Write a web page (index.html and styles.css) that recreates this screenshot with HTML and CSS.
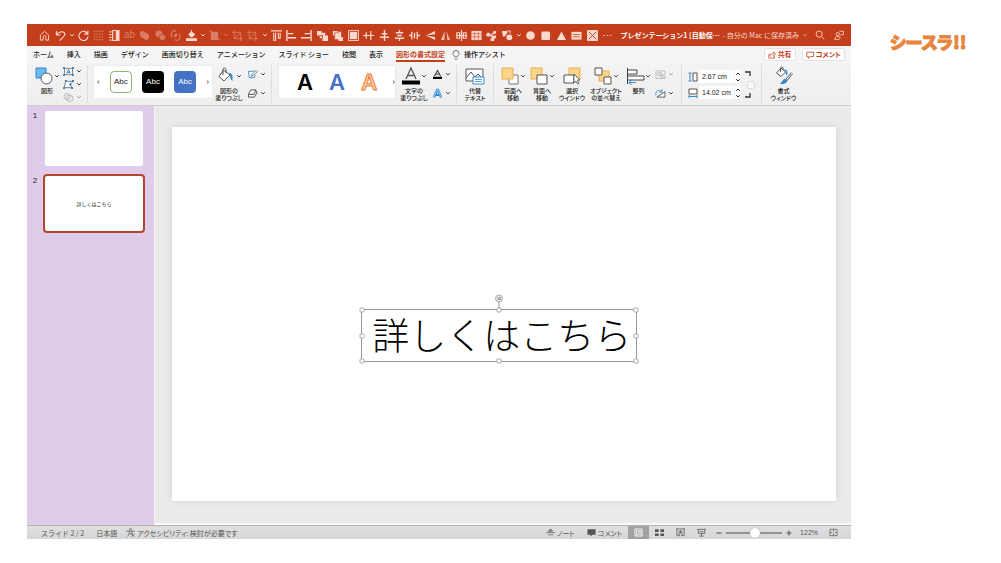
FILE: index.html
```html
<!DOCTYPE html>
<html lang="ja">
<head>
<meta charset="utf-8">
<title>プレゼンテーション1</title>
<link rel="stylesheet" href="styles.css">
</head>
<body>
<svg class="sprite" aria-hidden="true">
  <symbol id="chev" viewBox="0 0 6 6"><path d="M1.200 2.200 3 4 4.800 2.200" fill="none" stroke="currentColor" stroke-width="1"/></symbol>
  <symbol id="home" viewBox="0 0 12 12"><path d="M1.500 5.500 6 1.500l4.500 4V11H7.500V7.500a1.500 1.500 0 0 0-3 0V11h-3z" fill="none" stroke="currentColor"/></symbol>
  <symbol id="undo" viewBox="0 0 12 12"><path d="M1.500 1v4.500H6M1.800 5.200C5 1 10.500 1 10.700 4.500c0 2-2.700 4-5.700 7" fill="none" stroke="currentColor" stroke-width="1.200"/></symbol>
  <symbol id="redo" viewBox="0 0 12 12"><path d="M10.800.5v4H7M10.500 4.200A5 5 0 1 0 11 7" fill="none" stroke="currentColor" stroke-width="1.200"/></symbol>
  <symbol id="dots" viewBox="0 0 12 12"><path d="M1 1.500h10M1 4.500h10M1 7.500h10M1 10.500h10" stroke="currentColor" stroke-width="1.500" stroke-dasharray="1.500 1.300"/></symbol>
  <symbol id="columns" viewBox="0 0 12 12"><path d="M0 2h3M0 5h3M0 8h3M0 11h3" stroke="currentColor"/><path d="M4 .5h4v11H4z" fill="none" stroke="currentColor" stroke-width="1.300"/><path d="M8.500 0h3v12h-3z" fill="currentColor"/></symbol>
  <symbol id="union" viewBox="0 0 12 12"><path d="M1 3.500C1 1.500 4 0 6 2.500 9 3 11.500 5 11 8s-4 4-6 1C2 9 1 6 1 3.500z" fill="currentColor"/></symbol>
  <symbol id="combine" viewBox="0 0 12 12"><circle cx="4.200" cy="4.200" r="3.700" fill="currentColor"/><circle cx="8" cy="8" r="3.500" fill="currentColor" stroke="#c43e1c" stroke-width=".8"/></symbol>
  <symbol id="intersect" viewBox="0 0 12 12"><path d="M7 1.500A3.500 3.500 0 1 0 3 7.500M9.500 4.500A3.500 3.500 0 1 1 5 10.500" fill="none" stroke="currentColor" stroke-width="1.300"/><path d="M4.500 6.500C4.500 4.500 6 3.500 8 4c.5 2-1 4-3 4z" fill="currentColor"/></symbol>
  <symbol id="fill" viewBox="0 0 12 12"><path d="M0 9h12v3H0zM2.500 5 6 1l4 4-3 3H5zM10 5l1.500 3" fill="currentColor"/><path d="M6 0v4" stroke="currentColor"/></symbol>
  <symbol id="cropfill" viewBox="0 0 12 12"><path d="M2 0h1v2h7v8H12v1H2z" fill="currentColor"/><path d="M0 2h3" stroke="currentColor"/></symbol>
  <symbol id="crop" viewBox="0 0 12 12"><path d="M2.500 0v9.500H12M0 2.500h9.500V12M3 9l6-6" fill="none" stroke="currentColor"/></symbol>
  <symbol id="aligntop" viewBox="0 0 12 12"><path d="M0 1h12M3 3v9h2V3M8 3v6h2V3" fill="none" stroke="currentColor" stroke-width="1.200"/></symbol>
  <symbol id="alignleft" viewBox="0 0 12 12"><path d="M1 0v12M2 4h6M2 8.500h9" fill="none" stroke="currentColor" stroke-width="1.500"/></symbol>
  <symbol id="alignright" viewBox="0 0 12 12"><path d="M11 0v12M10 4H4M10 8.500H0" fill="none" stroke="currentColor" stroke-width="1.500"/></symbol>
  <symbol id="tofront" viewBox="0 0 12 12"><path d="M0 1h5v2h4v3h3v6H6V9H3V6H0z" fill="currentColor"/><path d="M3 6h3v3" fill="none" stroke="#c43e1c"/></symbol>
  <symbol id="toback" viewBox="0 0 12 12"><path d="M1 1h5v1h4v6h2v4H7v-2H3V6H1z" fill="currentColor"/><path d="M3 8V3h5" fill="none" stroke="#c43e1c" stroke-width=".7"/></symbol>
  <symbol id="framed" viewBox="0 0 12 12"><path d="M.5.500h11v11H.5z" fill="none" stroke="currentColor"/><path d="M2 2h8v8H2z" fill="currentColor"/></symbol>
  <symbol id="disth" viewBox="0 0 12 12"><path d="M0 6h12M3.500 2.500v7M8.500 1v10" stroke="currentColor" stroke-width="1.300"/></symbol>
  <symbol id="alignmid" viewBox="0 0 12 12"><path d="M6 0v12M3 4h6M1 8h10" stroke="currentColor" stroke-width="1.600"/></symbol>
  <symbol id="distv" viewBox="0 0 12 12"><path d="M2 3h8M1 9h10M6 0v3M6 9v3M3.500 6h5" stroke="currentColor" stroke-width="1.500"/></symbol>
  <symbol id="dist3" viewBox="0 0 12 12"><path d="M3 2v8M9 2v8M0 6h3M9 6h3M6 3v6" fill="none" stroke="currentColor" stroke-width="1.500"/></symbol>
  <symbol id="flipv" viewBox="0 0 12 12"><path d="M11 1v3.500L1 6zM11 11V7.500L1 6z" fill="currentColor"/></symbol>
  <symbol id="fliph" viewBox="0 0 12 12"><path d="M5 1v10H1zM7 1l4 10H8z" fill="currentColor" opacity=".8"/></symbol>
  <symbol id="centerv" viewBox="0 0 12 12"><path d="M6 0v12M1 3h3v6H1zM8 3h3v6H8zM0 6h12" fill="none" stroke="currentColor" stroke-width="1.300"/></symbol>
  <symbol id="table" viewBox="0 0 12 12"><path d="M.5 1h11v10H.5z" fill="currentColor"/><path d="M1 4h10M1 7.500h10M4 2v9M8 2v9" stroke="#c43e1c" stroke-width=".6"/></symbol>
  <symbol id="connect" viewBox="0 0 12 12"><path d="M0 5.500h5M5 6l5-4M5 6l4 4" stroke="currentColor" stroke-width="1.500"/><path d="M1 3h3v4H1zM8 1h3v3H8zM7 6h4v3H7zM5 9h4v3H5z" fill="currentColor"/></symbol>
  <symbol id="shapes" viewBox="0 0 12 12"><path d="M0 1h6v2L3 7H1z" fill="currentColor"/><circle cx="8" cy="8" r="3.200" fill="currentColor"/><path d="M6 1h3v3" fill="none" stroke="currentColor"/></symbol>
  <symbol id="circle" viewBox="0 0 12 12"><circle cx="6" cy="6" r="4.700" fill="currentColor"/></symbol>
  <symbol id="square" viewBox="0 0 12 12"><rect x="1.500" y="1.500" width="9.500" height="9.500" rx="1.500" fill="currentColor"/></symbol>
  <symbol id="triangle" viewBox="0 0 12 12"><path d="M6 1.500 11 11H1z" fill="currentColor"/></symbol>
  <symbol id="textbox" viewBox="0 0 12 12"><path d="M.5 2h11v8.500H.5z" fill="currentColor"/><path d="M2 5h8M2 7.500h8" stroke="#c43e1c" stroke-width=".8"/></symbol>
  <symbol id="cross" viewBox="0 0 12 12"><path d="M.5.500h11v11H.5z" fill="currentColor" stroke="currentColor"/><path d="m2 2 8 8M10 2l-8 8" stroke="#c43e1c"/></symbol>
  <symbol id="more" viewBox="0 0 12 12"><path d="M1.500 6h1.500M5.300 6h1.500M9 6h1.500" stroke="currentColor" stroke-width="1.300"/></symbol>
  <symbol id="search" viewBox="0 0 12 12"><circle cx="5" cy="5" r="3.700" fill="none" stroke="currentColor"/><path d="m7.800 7.800 3.200 3.500" stroke="currentColor"/></symbol>
  <symbol id="people" viewBox="0 0 12 12"><circle cx="4.500" cy="5" r="2" fill="none" stroke="currentColor"/><path d="M1 11.500c0-2.500 1-3.500 3.500-3.500S8 9 7 10.500c-1.500 1.500-4 1-6 1M6.500 1.500h5v4H9L7.500 7" fill="none" stroke="currentColor"/></symbol>
  <symbol id="pail" viewBox="0 0 18 18"><path d="M6.500 3 2 9.500l5 4.500 6-6zM6 8V2.500a1.500 1.500 0 0 1 3 0V6" fill="#fff" stroke="#555"/><path d="M12 6c3 0 4 2 3.500 8-2-1-2-3-2.500-5z" fill="#2f8ad0"/></symbol>
</svg>

<div class="page">
<main class="window">
  <header class="titlebar">
    <div class="quick">
      <button aria-label="ホーム"><svg><use href="#home"/></svg></button>
      <button aria-label="元に戻す"><svg><use href="#undo"/></svg></button>
      <button class="drop" aria-label="履歴"><svg><use href="#chev"/></svg></button>
      <button aria-label="やり直し"><svg><use href="#redo"/></svg></button>
      <button class="dim" aria-label="グリッド"><svg><use href="#dots"/></svg></button>
      <button aria-label="段組み"><svg><use href="#columns"/></svg></button>
      <button class="dim ab">ab</button>
      <button class="dim" aria-label="接合"><svg><use href="#union"/></svg></button>
      <button class="dim" aria-label="型抜き"><svg><use href="#combine"/></svg></button>
      <button class="dim" aria-label="重なり抽出"><svg><use href="#intersect"/></svg></button>
      <button aria-label="塗りつぶし"><svg><use href="#fill"/></svg></button>
      <button class="drop" aria-label="塗りつぶしの色"><svg><use href="#chev"/></svg></button>
      <button class="dim" aria-label="図"><svg><use href="#cropfill"/></svg></button>
      <button class="drop dim" aria-label="図の種類"><svg><use href="#chev"/></svg></button>
      <button class="dim" aria-label="トリミング"><svg><use href="#crop"/></svg></button>
      <button class="dim" aria-label="図形に合わせる"><svg><use href="#crop"/></svg></button>
      <button class="drop" aria-label="トリミングの種類"><svg><use href="#chev"/></svg></button>
      <button aria-label="上揃え"><svg><use href="#aligntop"/></svg></button>
      <button aria-label="左揃え"><svg><use href="#alignleft"/></svg></button>
      <button aria-label="右揃え"><svg><use href="#alignright"/></svg></button>
      <button aria-label="最前面"><svg><use href="#tofront"/></svg></button>
      <button aria-label="最背面"><svg><use href="#toback"/></svg></button>
      <button aria-label="枠"><svg><use href="#framed"/></svg></button>
      <button aria-label="上下中央"><svg><use href="#disth"/></svg></button>
      <button aria-label="左右中央"><svg><use href="#alignmid"/></svg></button>
      <button aria-label="上下に整列"><svg><use href="#distv"/></svg></button>
      <button aria-label="左右に整列"><svg><use href="#dist3"/></svg></button>
      <button aria-label="上下反転"><svg><use href="#flipv"/></svg></button>
      <button aria-label="左右反転"><svg><use href="#fliph"/></svg></button>
      <button aria-label="中央"><svg><use href="#centerv"/></svg></button>
      <button aria-label="表"><svg><use href="#table"/></svg></button>
      <button aria-label="コネクタ"><svg><use href="#connect"/></svg></button>
      <button aria-label="図形"><svg><use href="#shapes"/></svg></button>
      <button class="drop" aria-label="図形の種類"><svg><use href="#chev"/></svg></button>
      <button aria-label="円"><svg><use href="#circle"/></svg></button>
      <button aria-label="四角形"><svg><use href="#square"/></svg></button>
      <button aria-label="三角形"><svg><use href="#triangle"/></svg></button>
      <button aria-label="テキストボックス"><svg><use href="#textbox"/></svg></button>
      <button aria-label="削除"><svg><use href="#cross"/></svg></button>
      <button aria-label="その他"><svg><use href="#more"/></svg></button>
    </div>
    <h1 class="doc"><b>プレゼンテーション1 [自動保⋯</b><span>- 自分の Mac に保存済み</span><svg class="chev"><use href="#chev"/></svg></h1>
    <div class="right-tools">
      <button aria-label="検索"><svg><use href="#search"/></svg></button>
      <button aria-label="共同編集"><svg><use href="#people"/></svg></button>
    </div>
  </header>

  <nav class="tabs">
    <button>ホーム</button><button>挿入</button><button>描画</button><button>デザイン</button><button>画面切り替え</button><button>アニメーション</button><button>スライド ショー</button><button>校閲</button><button>表示</button><button class="active">図形の書式設定</button>
    <button class="assist"><svg viewBox="0 0 8 10"><path d="M2.700 7C2.700 5.500 1 5 1 3.300a3 3 0 0 1 6 0C7 5 5.300 5.500 5.300 7zM2.800 9.300h2.400" fill="none" stroke="#666" stroke-width=".9"/></svg>操作アシスト</button>
    <span class="spacer"></span>
    <button class="pill"><svg viewBox="0 0 10 10"><path d="M3 4H1v5h7V6M3 7c0-3 2-4 4-4V1l2.500 3L7 6V4.500" fill="none" stroke="currentColor" stroke-width=".9"/></svg>共有</button>
    <button class="pill"><svg viewBox="0 0 10 10"><path d="M1 1.500h8.500v5.500H5L3 9V7H1z" fill="none" stroke="currentColor"/></svg>コメント</button>
  </nav>

  <section class="ribbon">
    <button class="tool">
      <span class="art"><svg class="big" viewBox="0 0 18 18"><path d="M1 1h10v10H1z" fill="#6db8ee" stroke="#2f8ad0"/><circle cx="11.500" cy="11.500" r="5.500" fill="#fff" stroke="#555"/></svg><svg class="chev"><use href="#chev"/></svg></span>
      <span class="label">図形</span>
    </button>
    <div class="stack three ruled">
      <button aria-label="テキスト ボックス"><svg viewBox="0 0 12 10"><path d="M1.500 1.500h9v7h-9z" fill="#fff" stroke="#777"/><path d="M4 7.500 6 2.500l2 5M4.700 6h2.600" fill="none" stroke="#1d78c1"/><path d="M0 0h2v2H0zM10 0h2v2h-2zM0 8h2v2H0zM10 8h2v2h-2z" fill="#1d78c1"/></svg><svg class="chev"><use href="#chev"/></svg></button>
      <button aria-label="頂点の編集"><svg viewBox="0 0 12 10"><path d="M3 1.500h8L8 5l2 3.500H1z" fill="#fff" stroke="#777"/><path d="M2 0h2v2H2zM10 0h2v2h-2zM0 8h2v2H0zM9 8h2v2H9zM7 4h2v2H7z" fill="#1d78c1"/></svg><svg class="chev"><use href="#chev"/></svg></button>
      <button class="off" aria-label="図形の結合"><svg viewBox="0 0 12 10"><circle cx="4.500" cy="4" r="3.500" fill="#ddd" stroke="#777"/><circle cx="7.500" cy="6" r="3.500" fill="none" stroke="#777"/></svg><svg class="chev"><use href="#chev"/></svg></button>
    </div>
    <div class="gallery">
      <span class="arrow">‹</span>
      <button class="swatch light">Abc</button>
      <button class="swatch black">Abc</button>
      <button class="swatch blue">Abc</button>
      <span class="arrow">›</span>
    </div>
    <button class="tool">
      <span class="art"><svg class="big"><use href="#pail"/></svg><svg class="chev"><use href="#chev"/></svg></span>
      <span class="label">図形の<br>塗りつぶし</span>
    </button>
    <div class="stack ruled">
      <button aria-label="図形の枠線"><svg viewBox="0 0 12 10"><path d="M9 5.500 8 8.500H2.500L1.500 1.500H8" fill="#fff" stroke="#2f8ad0"/><path d="m4.500 7 1-2.500L10 .5 11.500 2 7 6z" fill="#fff" stroke="#555" stroke-width=".8"/></svg><svg class="chev"><use href="#chev"/></svg></button>
      <button aria-label="図形の効果"><svg viewBox="0 0 12 10"><path d="M4 1h5.500L8 6H1.500zM1.500 6v3H8l3-4.500L9.500 1" fill="#fff" stroke="#444"/></svg><svg class="chev"><use href="#chev"/></svg></button>
    </div>
    <div class="gallery art-text">
      <button class="wa">A</button>
      <button class="wa wa-blue">A</button>
      <button class="wa wa-orange">A</button>
      <span class="arrow">›</span>
    </div>
    <button class="tool">
      <span class="art"><svg class="big" viewBox="0 0 18 18"><path d="M4 12 9 1l5 11M5.500 8.500h7" fill="none" stroke="#555" stroke-width="1.300"/><path d="M0 13.500h18v4H0z"/></svg><svg class="chev"><use href="#chev"/></svg></span>
      <span class="label">文字の<br>塗りつぶし</span>
    </button>
    <div class="stack ruled">
      <button aria-label="文字の輪郭"><svg viewBox="0 0 12 10"><path d="M2.500 7 6 .5 9.500 7M4 4.800h4" fill="none" stroke="#444" stroke-width="1.200"/><path d="M1 7.500h10V10H1z"/></svg><svg class="chev"><use href="#chev"/></svg></button>
      <button aria-label="文字の効果"><svg viewBox="0 0 12 10"><path d="M2 9.500 5.500 1h1L10 9.500M4 6.500h4" fill="none" stroke="#2f8ad0" stroke-width="2.600"/><path d="M2 9.500 5.500 1h1L10 9.500" fill="none" stroke="#fff" stroke-width=".6"/></svg><svg class="chev"><use href="#chev"/></svg></button>
    </div>
    <button class="tool ruled">
      <span class="art"><svg class="wide" viewBox="0 0 20 18"><path d="M1 2h17v12H1zM1 11l5-6 4 5 3-3 4 4" fill="#fff" stroke="#555"/><path d="M8 10h11v7H8z" fill="#fff" stroke="#2f8ad0"/><path d="M10 12.500h7M10 14.500h7" stroke="#2f8ad0" stroke-width=".8"/></svg></span>
      <span class="label">代替<br>テキスト</span>
    </button>
    <button class="tool lead">
      <span class="art"><svg class="big" viewBox="0 0 18 18"><path d="M8 8h9v9H8z" fill="#fff" stroke="#777"/><path d="M1 1h11v11H1z" fill="#fbd58c" stroke="#e8b04c"/></svg><svg class="chev"><use href="#chev"/></svg></span>
      <span class="label">前面へ<br>移動</span>
    </button>
    <button class="tool">
      <span class="art"><svg class="big" viewBox="0 0 18 18"><path d="M1 1h11v11H1z" fill="#fbd58c" stroke="#e8b04c"/><path d="M7 8h10v9H7z" fill="#fff" stroke="#555"/></svg><svg class="chev"><use href="#chev"/></svg></span>
      <span class="label">背面へ<br>移動</span>
    </button>
    <button class="tool">
      <span class="art"><svg class="big" viewBox="0 0 18 18"><path d="M6 1h11v11H6z" fill="#fbd58c" stroke="#e8b04c"/><path d="M1 8h10v8H1z" fill="#fff" stroke="#555"/><path d="M11 7v9l2-2 1.500 3 1.500-1-1.500-3H17z" fill="#fff" stroke="#444" stroke-width=".8"/></svg></span>
      <span class="label">選択<br>ウインドウ</span>
    </button>
    <button class="tool">
      <span class="art"><svg class="big" viewBox="0 0 18 18"><path d="M5 4h10v10H5z" fill="#fbd58c" stroke="#e8b04c"/><path d="M1 1h7v7H1zM10 10h7v7h-7z" fill="#fff" stroke="#555"/></svg><svg class="chev"><use href="#chev"/></svg></span>
      <span class="label">オブジェクト<br>の並べ替え</span>
    </button>
    <button class="tool">
      <span class="art"><svg class="big" viewBox="0 0 18 18"><path d="M1.500 1v16M1.500 3H11v4H1.500M1.500 9H18v4H1.500" fill="#fff" stroke="#444"/><path d="M10 15.500H3M5.500 13 3 15.500 5.500 18" fill="none" stroke="#2f8ad0"/></svg><svg class="chev"><use href="#chev"/></svg></span>
      <span class="label">整列</span>
    </button>
    <div class="stack ruled">
      <button class="off" aria-label="グループ化"><svg viewBox="0 0 12 10"><path d="M1 1h10v8.500H1zM3 3h4v3H3zM6 5h3v3H6z" fill="none" stroke="#777"/></svg><svg class="chev"><use href="#chev"/></svg></button>
      <button aria-label="回転"><svg viewBox="0 0 12 10"><path d="M11 3v6H2z" fill="#fff" stroke="#555"/><path d="M1 7C0 2 4 0 7.500 3M7.500.5V3.500H4.500" fill="none" stroke="#2f8ad0"/></svg><svg class="chev"><use href="#chev"/></svg></button>
    </div>
    <div class="size ruled">
      <label class="field"><svg viewBox="0 0 10 10"><path d="M5 1h4v8H5z" fill="#fff" stroke="#555"/><path d="M2 1v8M.5 1h3M.5 9h3" fill="none" stroke="#2f8ad0"/></svg><input type="text" value="2.67 cm" aria-label="高さ"><span class="step"><svg><use href="#chev"/></svg><svg><use href="#chev"/></svg></span></label>
      <label class="field"><svg viewBox="0 0 10 10"><path d="M1 1h8v5H1z" fill="#fff" stroke="#555"/><path d="M1 8.500h8M1 7v3M9 7v3" fill="none" stroke="#2f8ad0"/></svg><input type="text" value="14.02 cm" aria-label="幅"><span class="step"><svg><use href="#chev"/></svg><svg><use href="#chev"/></svg></span></label>
      <div class="lock"><svg viewBox="0 0 6 5"><path d="M0 1h5v4" fill="none" stroke="#333" stroke-width="1.300"/></svg><input type="checkbox" aria-label="縦横比の固定"><svg viewBox="0 0 6 5"><path d="M0 4h5V0" fill="none" stroke="#333" stroke-width="1.300"/></svg></div>
    </div>
    <button class="tool">
      <span class="art"><svg class="big" viewBox="0 0 18 18"><path d="M6 1 1.500 6 6 9.500 10.500 5zM5.500 5V1A1.300 1.300 0 0 1 8 1v2" fill="#fff" stroke="#555"/><path d="M9.500 3c2 0 2.500 1.500 2 5" fill="none" stroke="#2f8ad0" stroke-width="1.500"/><path d="m17 6-5.500 7" stroke="#666" stroke-width="2.600"/><path d="m17 6-5.500 7" stroke="#fff" stroke-width="1"/><path d="M11 12c-3-1-3 3-6 4.500 3 1.500 7 0 7.500-3z" fill="#2f8ad0"/></svg></span>
      <span class="label">書式<br>ウィンドウ</span>
    </button>
  </section>

  <section class="workspace">
    <aside class="thumbs">
      <div class="thumb"><span>1</span><button class="mini" aria-label="スライド 1"></button></div>
      <div class="thumb"><span>2</span><button class="mini current">詳しくはこちら</button></div>
    </aside>
    <div class="canvas">
      <article class="slide">
        <div class="textframe">
          <p>詳しくはこちら</p>
          <i class="h nw"></i><i class="h n"></i><i class="h ne"></i><i class="h w"></i><i class="h e"></i><i class="h sw"></i><i class="h s"></i><i class="h se"></i>
          <svg class="rotate" viewBox="0 0 10 14"><path d="M5 8v6" stroke="#999"/><circle cx="5" cy="4.500" r="3.500" fill="#eee" stroke="#aaa"/><path d="M3 4h4L5.800 3M7 5.500H3.500" fill="none" stroke="#777" stroke-width=".8"/></svg>
        </div>
      </article>
    </div>
  </section>

  <footer class="status">
    <span>スライド 2 / 2</span>
    <span class="lang">日本語</span>
    <button class="note"><svg viewBox="0 0 10 10"><circle cx="5" cy="1.500" r="1.200" fill="none" stroke="#666" stroke-width=".8"/><path d="M0 3.500h10M3.500 3.500v2.500L2 9.500M6.500 3.500V6L8 9.500M3.500 6.500h3" fill="none" stroke="#666" stroke-width=".9"/><path d="m6 6 3.500 3.500M9.500 6 6 9.500" stroke="#666" stroke-width=".8"/></svg>アクセシビリティ: 検討が必要です</button>
    <span class="spacer"></span>
    <button class="note"><svg viewBox="0 0 10 10"><path d="M2.500 3.500 5 1l2.500 2.500zM0 5h10M2 7.500h6" fill="#777" stroke="#777"/></svg>ノート</button>
    <button class="note comment"><svg viewBox="0 0 10 10"><path d="M.5 1.500h9v6H6L4 9.500v-2H.5z" fill="#555"/></svg>コメント</button>
    <div class="views">
      <button class="on" aria-label="標準"><svg viewBox="0 0 10 10"><path d="M1 1h8v8H1zM3 1v8M3 7h6M5 3h2.500v2H5z" fill="none" stroke="#fff" stroke-width=".9"/></svg></button>
      <button aria-label="一覧"><svg viewBox="0 0 10 10"><path d="M0 1.500h4v3H0zM6 1.500h4v3H6zM0 6h4v3H0zM6 6h4v3H6z" fill="#555"/></svg></button>
      <button aria-label="閲覧表示"><svg viewBox="0 0 10 10"><path d="M0 1h10M1 1v7.500h3M9 1v7.500H6M3.500 3v5.500M6.500 3v5.500M5 2v4" fill="none" stroke="#666"/></svg></button>
      <button aria-label="スライド ショー"><svg viewBox="0 0 10 10"><path d="M0 1.500h10M1.500 2v4h7V2M5 6v3M2.500 9h5M3 4h4" fill="none" stroke="#666"/></svg></button>
    </div>
    <button class="sign" aria-label="縮小"><svg viewBox="0 0 6 6"><path d="M.5 3h5" stroke="#555" stroke-width="1.100"/></svg></button>
    <input class="zoom" type="range" min="0" max="100" value="53" aria-label="ズーム">
    <button class="sign" aria-label="拡大"><svg viewBox="0 0 6 6"><path d="M.5 3h5M3 .5v5" stroke="#555" stroke-width="1.100"/></svg></button>
    <span class="percent">122%</span>
    <button class="fit" aria-label="ウィンドウに合わせる"><svg viewBox="0 0 10 10"><path d="M1 1.500h8v7H1zM5 1v3M5 6v3M1 5h2.500M6.500 5H9" fill="none" stroke="#777"/></svg></button>
  </footer>
</main>
<div class="brand">シースラ!!</div>
</div>
</body>
</html>
```
FILE: styles.css
```css
* { box-sizing: border-box; }

body {
  margin: 0;
  background: #fff;
  color: #222;
  font-family: "Noto Sans CJK JP", sans-serif;
  font-size: 7px;
}

button, input {
  margin: 0;
  padding: 0;
  border: 0;
  background: none;
  color: inherit;
  font: inherit;
}

svg { display: block; flex: none; overflow: visible; }
.sprite { position: absolute; width: 0; height: 0; }
.spacer { flex: 1; }
.chev { width: 6px; height: 6px; color: #444; }

.page {
  display: flex;
  min-height: 100vh;
  padding: 24px 0 24px 27px;
}

.window {
  display: flex;
  flex: 1;
  flex-direction: column;
  min-width: 0;
}

.brand {
  width: 150px;
  padding: 5px 0 0 39px;
  color: #e8843c;
  font-size: 17px;
  font-weight: 900;
  line-height: 26px;
  font-feature-settings: "palt";
  white-space: nowrap;
  -webkit-text-stroke: 1px #e8843c;
}

/* title bar */
.titlebar {
  display: flex;
  align-items: center;
  height: 22px;
  padding: 0 7px 0 10px;
  background: #c43e1c;
  color: #fbd9cf;
}
.quick { display: flex; flex: 1; align-items: center; }
.quick button {
  display: flex;
  flex: 2 1 0;
  justify-content: center;
  min-width: 0;
}
.quick button.drop { flex-grow: 1; }
.quick svg { width: 11px; height: 11px; }
.quick .drop svg { width: 6px; height: 6px; }
.quick .dim { opacity: .4; }
.quick .ab { font: 10px/12px "Liberation Sans", sans-serif; }

.doc {
  display: flex;
  align-items: center;
  gap: 3px;
  margin: 0 0 0 5px;
  font-size: 7px;
  font-weight: 400;
  white-space: nowrap;
}
.doc b { color: #fff; }
.doc .chev { color: inherit; opacity: .6; }
.right-tools { display: flex; gap: 9px; margin-left: 7px; }
.right-tools svg { width: 10px; height: 10px; }

/* tabs */
.tabs {
  display: flex;
  gap: 13px;
  align-items: center;
  height: 17px;
  padding: 0 6px;
  background: #f6f5f5;
  font-weight: 500;
  white-space: nowrap;
}
.tabs button { line-height: 11px; }
.tabs .active {
  border-bottom: 2px solid #c43e1c;
  border-top: 2px solid transparent;
  color: #c43e1c;
  font-weight: 700;
}
.tabs .assist { display: flex; gap: 4px; align-items: center; margin-left: -6px; }
.assist svg { width: 8px; height: 10px; }
.tabs .pill {
  display: flex;
  gap: 2px;
  align-items: center;
  height: 13px;
  padding: 0 3px;
  border: 1px solid #e4e2e2;
  border-radius: 2px;
  background: #fff;
  color: #c43e1c;
  font-weight: 700;
  font-feature-settings: "palt";
}
.pill svg { width: 8px; height: 8px; }
.pill + .pill { margin-left: -7px; }

/* ribbon */
.ribbon {
  display: grid;
  grid-template-columns: 28px 27px 125px 32px 27px 126px 32px 27px 37px 34px 28px 32px 36px 29px 29px 80px 43px;
  height: 43px;
  padding: 2px 6px 3px;
  border-bottom: 1px solid #cfcdcd;
  background: linear-gradient(#f4f3f3, #f0efef);
}
.ruled { border-right: 1px solid #dedddd; }

.tool {
  display: flex;
  flex-direction: column;
  align-items: center;
  min-width: 0;
}
.lead { padding-left: 4px; }
.art {
  display: flex;
  gap: 1px;
  align-items: center;
  justify-content: center;
  height: 22px;
}
.big { width: 18px; height: 18px; }
.wide { width: 20px; height: 18px; }
.label {
  font-size: 6px;
  font-weight: 500;
  line-height: 7px;
  font-feature-settings: "palt";
  white-space: nowrap;
  text-align: center;
}

.stack {
  display: flex;
  flex-direction: column;
  gap: 7px;
  padding: 3px 0 0 2px;
}
.stack.three { gap: 1px; padding-top: 0; }
.stack button { display: flex; gap: 2px; align-items: center; height: 12px; }
.stack button svg:first-child { width: 11px; height: 9px; }
.off { opacity: .45; }

.gallery {
  display: flex;
  align-items: center;
  justify-content: space-between;
  height: 34px;
  margin-left: 5px;
  padding: 0 3px;
  border: 1px solid #ecebeb;
  background: #fff;
}
.swatch {
  width: 22px;
  height: 22px;
  border-radius: 4px;
  color: #fff;
  font: 8px/20px "Liberation Sans", sans-serif;
}
.light { border: 1px solid #8fb573; color: #222; }
.black { background: #000; }
.blue { background: #4472c4; }
.arrow { font-size: 9px; line-height: 10px; color: #333; }
.art-text { margin: 0 2px 0 6px; padding: 0 0 0 17px; }
.wa {
  width: 18px;
  color: #000;
  font: 600 22px/30px Inter, sans-serif;
}
.wa-blue { color: #4472c4; }
.wa-orange { color: #fbd0b0; -webkit-text-stroke: 1px #ed7d31; }

.size {
  display: grid;
  grid-template-columns: 55px 12px;
  grid-template-rows: 13px 13px;
  row-gap: 3px;
  column-gap: 2px;
  padding: 5px 0 0 6px;
}
.field { display: flex; align-items: center; gap: 1px; }
.field > svg { width: 10px; height: 10px; }
.field input {
  width: 35px;
  height: 13px;
  padding-left: 3px;
  background: #fff;
  font: 7px/13px "Liberation Sans", sans-serif;
}
.step {
  display: flex;
  flex-direction: column;
  justify-content: center;
  height: 13px;
  background: #fff;
}
.step svg { width: 6px; height: 6px; }
.step svg:first-child { transform: rotate(180deg); }
.lock {
  display: flex;
  grid-area: 1 / 2 / 3 / 3;
  flex-direction: column;
  justify-content: space-between;
  padding: 1px 0;
}
.lock svg { width: 6px; height: 5px; }
.lock input {
  width: 8px;
  height: 8px;
  margin-left: 2px;
  border: 1px solid #dcdcdc;
  border-radius: 2px;
  background: #f8f8f8;
  appearance: none;
}

/* workspace */
.workspace { display: flex; flex: 1; min-height: 0; }
.thumbs {
  display: flex;
  flex-direction: column;
  gap: 6px;
  width: 128px;
  padding: 3px 9px 0 5px;
  border-right: 1px solid #f8f4fa;
  background: #dfcbea;
}
.thumb { display: flex; gap: 5px; }
.thumb span {
  width: 6px;
  font: 8px/14px "Liberation Sans", sans-serif;
  text-align: center;
}
.mini {
  flex: 1;
  aspect-ratio: 102 / 59;
  border: 2px solid transparent;
  border-radius: 4px;
  background: #fff;
  background-clip: padding-box;
  font-size: 5px;
}
.current { border-color: #b2472d; }

.canvas {
  flex: 1;
  padding: 21px 15px 0 17px;
  border-bottom: 2px solid #f8f8f8;
  background: #ebebeb;
}
.slide {
  position: relative;
  aspect-ratio: 664 / 374;
  background: #fff;
  box-shadow: 0 0 8px rgba(0, 0, 0, .1);
}
.textframe {
  position: absolute;
  top: 48.700%;
  left: 28.500%;
  padding: 0 5px 3px 10px;
  border: 1px solid #999;
}
.textframe p {
  margin: 0;
  color: #000;
  font-size: 37px;
  font-weight: 300;
  line-height: 48px;
  white-space: nowrap;
}
.h {
  position: absolute;
  width: 5px;
  height: 5px;
  border: 1px solid #aaa;
  border-radius: 1px;
  background: #fff;
  transform: translate(-50%, -50%);
}
.nw { top: 0; left: 0; }
.n { top: 0; left: 50%; }
.ne { top: 0; left: 100%; }
.w { top: 50%; left: 0; }
.e { top: 50%; left: 100%; }
.sw { top: 100%; left: 0; }
.s { top: 100%; left: 50%; }
.se { top: 100%; left: 100%; }
.rotate {
  position: absolute;
  bottom: 100%;
  left: 50%;
  width: 10px;
  height: 14px;
  margin: 0 0 2px -5px;
}

/* status bar */
.status {
  display: flex;
  align-items: center;
  height: 14px;
  padding: 0 13px 0 14px;
  border-top: 1px solid #b4b4b4;
  background: linear-gradient(#e0e0e0, #d6d6d6);
  color: #555;
  white-space: nowrap;
}
.lang { margin: 0 9px 0 12px; }
.note {
  display: flex;
  gap: 2px;
  align-items: center;
  font-feature-settings: "palt";
}
.note svg { width: 9px; height: 9px; }
.comment { margin: 0 6px 0 12px; }
.views { display: flex; }
.views button {
  display: flex;
  align-items: center;
  justify-content: center;
  width: 21px;
  height: 13px;
}
.views .on { background: #a2a2a2; }
.views svg { width: 9px; height: 9px; }
.sign { margin: 0 4px; }
.sign svg { width: 6px; height: 6px; }
.zoom {
  width: 56px;
  height: 11px;
  appearance: none;
  background: none;
}
.zoom::-webkit-slider-runnable-track { height: 2px; background: #929292; }
.zoom::-webkit-slider-thumb {
  width: 10px;
  height: 10px;
  margin-top: -4px;
  border-radius: 50%;
  background: #fff;
  box-shadow: 0 0 1px #888;
  appearance: none;
}
.percent { margin: 0 11px 0 4px; font-family: "Liberation Sans", sans-serif; }
.fit svg { width: 9px; height: 9px; }
```
